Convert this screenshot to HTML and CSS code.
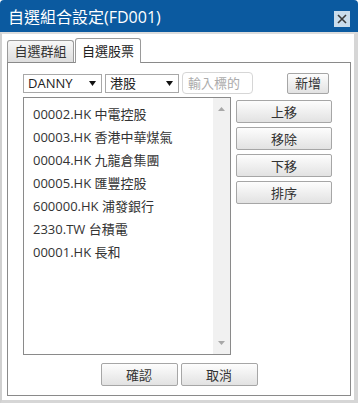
FILE: index.html
```html
<!DOCTYPE html>
<html lang="zh-Hant">
<head>
    <meta charset="UTF-8">
    <meta name="viewport" content="width=device-width, initial-scale=1.0">
    <title>自選組合設定</title>
    <link rel="stylesheet" href="styles.css">
</head>
<body>
    <div class="dialog">
        <div class="titlebar">
            <span class="title">自選組合設定(FD001)</span>
            <span class="close">
                <svg width="16" height="16" viewBox="0 0 16 16">
                    <path d="M4 4 L12 12 M12 4 L4 12" stroke="#3a3a3a" stroke-width="1.6" fill="none"/>
                </svg>
            </span>
        </div>

        <div class="dialog-body">
            <div class="tabs">
                <div class="tab">自選群組</div>
                <div class="tab active">自選股票</div>
            </div>

            <div class="panel">
                <div class="toolbar">
                    <div class="select select-user">
                        <span>DANNY</span>
                        <svg width="7" height="5" viewBox="0 0 7 5"><path d="M0 0 H7 L3.5 5 Z" fill="#111"/></svg>
                    </div>
                    <div class="select select-market">
                        <span>港股</span>
                        <svg width="7" height="5" viewBox="0 0 7 5"><path d="M0 0 H7 L3.5 5 Z" fill="#111"/></svg>
                    </div>
                    <input type="text" class="symbol-input" placeholder="輸入標的">
                    <button class="btn btn-add">新增</button>
                </div>

                <div class="main">
                    <div class="stock-list">
                        <ul class="items">
                            <li>00002.HK 中電控股</li>
                            <li>00003.HK 香港中華煤氣</li>
                            <li>00004.HK 九龍倉集團</li>
                            <li>00005.HK 匯豐控股</li>
                            <li>600000.HK 浦發銀行</li>
                            <li>2330.TW 台積電</li>
                            <li>00001.HK 長和</li>
                        </ul>
                        <div class="scrollbar">
                            <svg width="7" height="4" viewBox="0 0 7 4"><path d="M0 4 H7 L3.5 0 Z" fill="#a8a8a8"/></svg>
                            <svg width="7" height="4" viewBox="0 0 7 4"><path d="M0 0 H7 L3.5 4 Z" fill="#a8a8a8"/></svg>
                        </div>
                    </div>
                    <div class="side-buttons">
                        <button class="btn btn-side">上移</button>
                        <button class="btn btn-side">移除</button>
                        <button class="btn btn-side">下移</button>
                        <button class="btn btn-side">排序</button>
                    </div>
                </div>

                <div class="footer">
                    <button class="btn btn-footer">確認</button>
                    <button class="btn btn-footer">取消</button>
                </div>
            </div>
        </div>
    </div>
</body>
</html>
```

FILE: styles.css
```css
* {
    box-sizing: border-box;
}
body {
    margin: 0;
    padding: 0;
    background-color: #fff;
    font-family: "Open Sans", "Noto Sans CJK TC", sans-serif;
    color: #333;
}
.dialog {
    width: 358px;
    height: 403px;
    display: flex;
    flex-direction: column;
    border-radius: 4px 4px 0 0;
    overflow: hidden;
}
.titlebar {
    height: 32px;
    flex: none;
    background-color: #0b5aa0;
    display: flex;
    align-items: center;
    justify-content: space-between;
    padding: 0 8px 0 8px;
}
.title {
    color: #fff;
    font-size: 16px;
    line-height: 20px;
    margin-top: 2px;
}
.close {
    width: 16px;
    height: 16px;
    background-color: #c9dcec;
    display: flex;
    margin-top: 6px;
}
.dialog-body {
    flex: 1;
    border-top: 2px solid #dcdcdc;
    border-left: 2px solid #d0d0d0;
    border-right: 4px solid #d6d6d6;
    border-bottom: 4px solid #d6d6d6;
    padding: 4px 3px 4px 5px;
    display: flex;
    flex-direction: column;
}
.tabs {
    display: flex;
    align-items: flex-end;
    height: 24px;
    flex: none;
}
.tab {
    height: 22px;
    width: 67px;
    margin-right: 1px;
    border: 1px solid #9a9a9a;
    border-bottom: none;
    border-radius: 3px 3px 0 0;
    background: linear-gradient(#f7f7f7, #dedede);
    font-size: 13px;
    line-height: 21px;
    text-align: center;
    color: #333;
}
.tab.active {
    height: 25px;
    width: 66px;
    margin-bottom: -1px;
    position: relative;
    background: #fff;
    color: #222;
    line-height: 24px;
}
.panel {
    flex: 1;
    border: 1px solid #8a8a8a;
    padding: 9px 15px 9px 15px;
    display: flex;
    flex-direction: column;
}
.toolbar {
    display: flex;
    align-items: center;
    height: 22px;
    margin-bottom: 3px;
}
.select {
    height: 19px;
    border: 1px solid #a8a8a8;
    background-color: #fff;
    display: flex;
    align-items: center;
    justify-content: space-between;
    padding: 0 5px 0 4px;
    font-size: 13px;
    color: #222;
}
.select span {
    line-height: 17px;
}
.select-user {
    width: 79px;
    margin-right: 3px;
}
.select-market {
    width: 74px;
    margin-right: 3px;
}
.symbol-input {
    width: 71px;
    height: 22px;
    border: 1px solid #d6d6d6;
    border-radius: 4px;
    padding: 0 5px;
    font-family: "Open Sans", "Noto Sans CJK TC", sans-serif;
    font-size: 13px;
    outline: none;
}
.symbol-input::placeholder {
    color: #ababab;
}
.btn {
    font-family: "Open Sans", "Noto Sans CJK TC", sans-serif;
    font-size: 13px;
    color: #333;
    background: linear-gradient(#fdfdfd, #e2e2e2);
    border: 1px solid #a6a6a6;
    border-radius: 2px;
    padding: 0;
    line-height: 18px;
    cursor: pointer;
}
.btn-add {
    width: 42px;
    height: 21px;
    margin-left: 34px;
}
.main {
    display: flex;
    height: 258px;
    flex: none;
}
.stock-list {
    width: 208px;
    height: 258px;
    border: 1px solid #8a8a8a;
    display: flex;
}
.items {
    list-style: none;
    margin: 0;
    padding: 5px 0 0 9px;
    flex: 1;
}
.items li {
    font-size: 13px;
    line-height: 23px;
    height: 23px;
    color: #333;
    white-space: nowrap;
}
.scrollbar {
    width: 17px;
    background-color: #f1f1f1;
    display: flex;
    flex-direction: column;
    justify-content: space-between;
    align-items: center;
    padding: 9px 0 9px 0;
}
.side-buttons {
    display: flex;
    flex-direction: column;
    gap: 4px;
    margin-left: 5px;
    padding-top: 3px;
}
.btn-side {
    width: 96px;
    height: 23px;
}
.footer {
    display: flex;
    justify-content: center;
    gap: 3px;
    margin-top: 8px;
}
.btn-footer {
    width: 77px;
    height: 23px;
}
```
